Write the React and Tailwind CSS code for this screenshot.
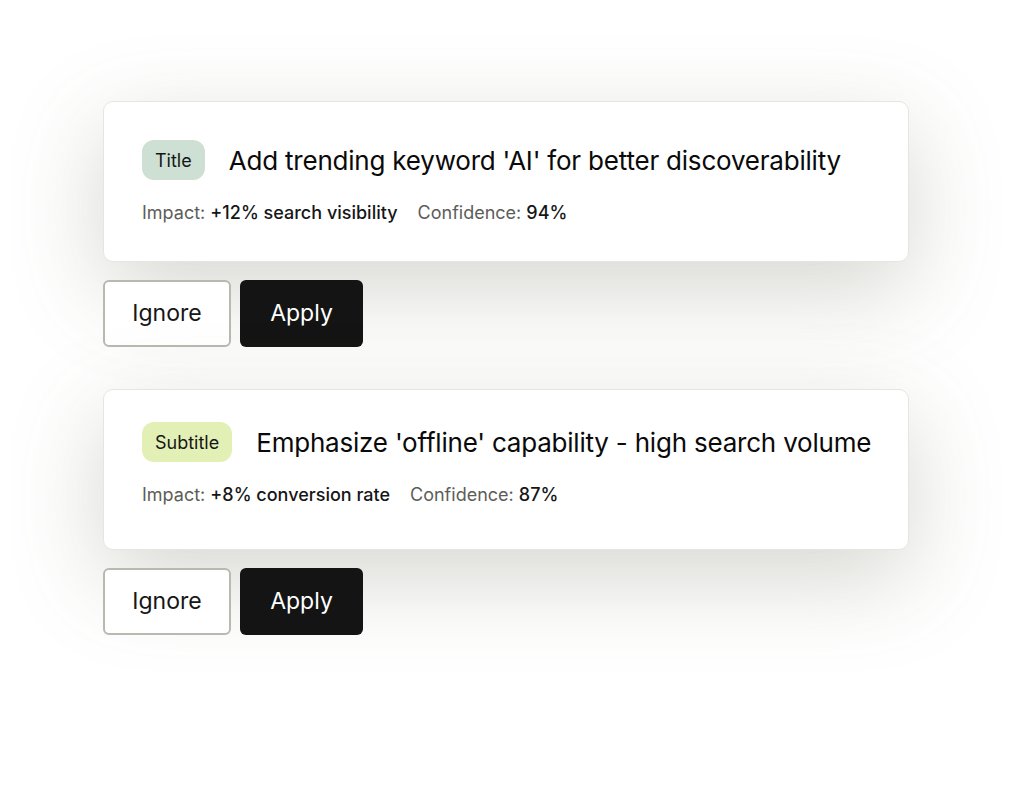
const suggestions = [
  {
    tag: 'Title',
    tagClass: 'bg-[#cde0d3]',
    padClass: 'pt-[38px] pb-[36px]',
    text: "Add trending keyword 'AI' for better discoverability",
    impact: '+12% search visibility',
    confidence: '94%',
  },
  {
    tag: 'Subtitle',
    tagClass: 'bg-[#e2efb5]',
    padClass: 'pt-[32px] pb-[42px]',
    text: "Emphasize 'offline' capability - high search volume",
    impact: '+8% conversion rate',
    confidence: '87%',
  },
]

function SuggestionCard({ s }) {
  return (
    <div className="flex flex-col gap-[18px]">
      <div className={`bg-white border border-[#e6e6e1] rounded-[10px] pl-[38px] pr-6 shadow-[0_28px_90px_rgba(105,105,85,0.27)] ${s.padClass}`}>
        <div className="flex items-center gap-6">
          <span className={`h-10 px-[13px] rounded-xl flex items-center text-[18px] text-[#161616] ${s.tagClass}`}>{s.tag}</span>
          <h2 className="text-[26px] text-[#0a0a0a] tracking-[-0.008em]">{s.text}</h2>
        </div>
        <div className="flex items-center gap-5 mt-[21px] text-[18px] leading-6">
          <p className="text-[#5d5d58]">Impact: <span className="text-[#161616] font-medium">{s.impact}</span></p>
          <p className="text-[#5d5d58]">Confidence: <span className="text-[#161616] font-medium">{s.confidence}</span></p>
        </div>
      </div>
      <div className="flex gap-[9px]">
        <button className="w-32 h-[67px] bg-white border-2 border-[#b9b9b1] rounded-md text-[23px] text-[#161616]">Ignore</button>
        <button className="w-[123px] h-[67px] bg-[#141414] rounded-md text-[23px] text-white">Apply</button>
      </div>
    </div>
  )
}

export default function App() {
  return (
    <div className="h-[792px] bg-white overflow-hidden font-['Inter',sans-serif]">
      <div className="w-[806px] ml-[103px] pt-[101px] flex flex-col gap-[42px]">
        {suggestions.map(s => <SuggestionCard key={s.tag} s={s} />)}
      </div>
    </div>
  )
}
